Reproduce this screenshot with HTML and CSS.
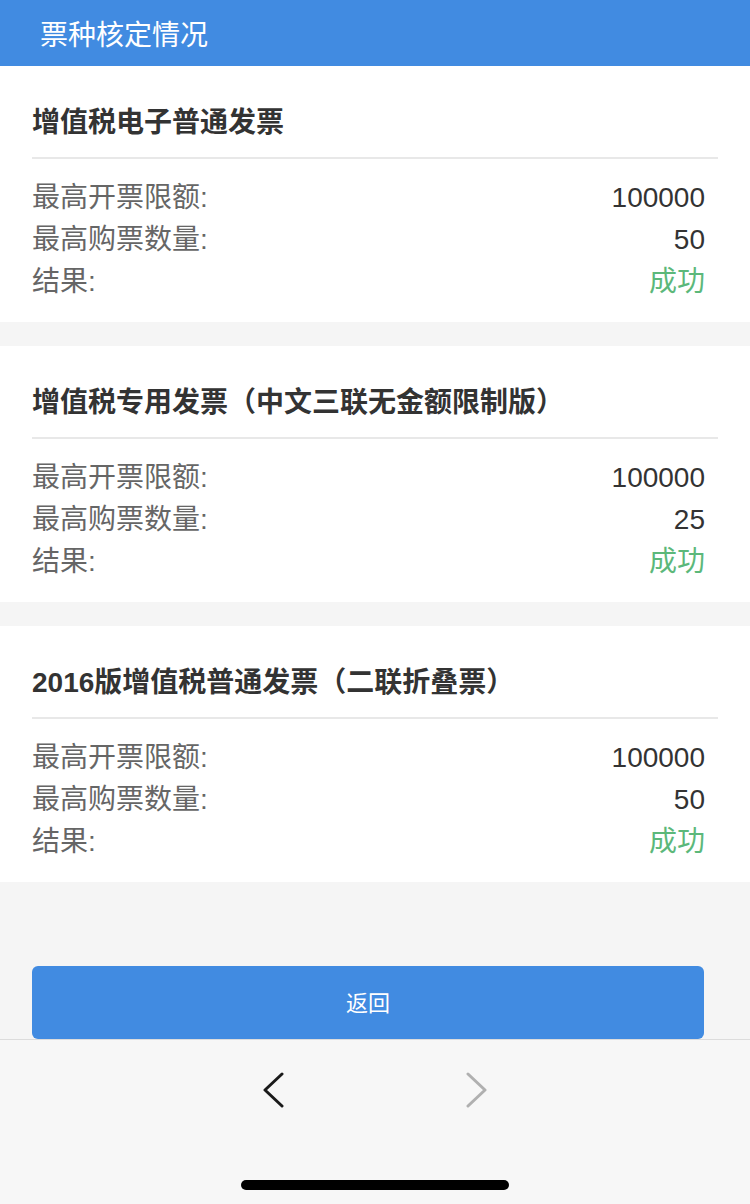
FILE: index.html
```html
<!DOCTYPE html>
<html lang="zh-CN">
<head>
    <meta charset="UTF-8">
    <meta name="viewport" content="width=device-width, initial-scale=1.0">
    <title>票种核定情况</title>
    <link rel="stylesheet" href="styles.css">
</head>
<body>
    <div class="header">票种核定情况</div>

    <div class="card">
        <div class="card-title">增值税电子普通发票</div>
        <div class="rows">
            <div class="row"><span class="label">最高开票限额:</span><span class="value">100000</span></div>
            <div class="row"><span class="label">最高购票数量:</span><span class="value">50</span></div>
            <div class="row"><span class="label">结果:</span><span class="value ok">成功</span></div>
        </div>
    </div>

    <div class="card">
        <div class="card-title">增值税专用发票（中文三联无金额限制版）</div>
        <div class="rows">
            <div class="row"><span class="label">最高开票限额:</span><span class="value">100000</span></div>
            <div class="row"><span class="label">最高购票数量:</span><span class="value">25</span></div>
            <div class="row"><span class="label">结果:</span><span class="value ok">成功</span></div>
        </div>
    </div>

    <div class="card">
        <div class="card-title">2016版增值税普通发票（二联折叠票）</div>
        <div class="rows">
            <div class="row"><span class="label">最高开票限额:</span><span class="value">100000</span></div>
            <div class="row"><span class="label">最高购票数量:</span><span class="value">50</span></div>
            <div class="row"><span class="label">结果:</span><span class="value ok">成功</span></div>
        </div>
    </div>

    <div class="actions">
        <button type="button" class="back-btn">返回</button>
    </div>

    <div class="toolbar">
        <div class="nav">
            <svg class="chev" width="24" height="36" viewBox="0 0 24 36">
                <polyline points="20,2 3,18 20,34" fill="none" stroke="#1a1a1a" stroke-width="3" stroke-linecap="round" stroke-linejoin="round"/>
            </svg>
            <svg class="chev" width="24" height="36" viewBox="0 0 24 36">
                <polyline points="4,2 21,18 4,34" fill="none" stroke="#b0b0b0" stroke-width="3" stroke-linecap="round" stroke-linejoin="round"/>
            </svg>
        </div>
        <div class="home-bar"></div>
    </div>
</body>
</html>
```

FILE: styles.css
```css
body {
    margin: 0;
    background-color: #f5f5f5;
    font-family: "Liberation Sans", "Noto Sans CJK SC", sans-serif;
    color: #333;
}
.header {
    height: 66px;
    line-height: 72px;
    padding-left: 40px;
    background: #418be1;
    color: white;
    font-size: 28px;
}
.card {
    background: white;
    padding: 36px 32px 19px;
    margin-bottom: 24px;
}
.card-title {
    font-size: 28px;
    font-weight: bold;
    line-height: 42px;
    padding-bottom: 13px;
    border-bottom: 2px solid #e8e8e8;
    color: #333;
}
.rows {
    margin-top: 18px;
    padding-right: 13px;
}
.row {
    display: flex;
    justify-content: space-between;
    font-size: 28px;
    line-height: 42px;
}
.label {
    color: #666;
}
.value {
    color: #333;
}
.value.ok {
    color: #5cb87a;
}
.actions {
    padding: 60px 46px 0 32px;
}
.back-btn {
    display: block;
    width: 100%;
    height: 73px;
    padding-bottom: 4px;
    border: none;
    border-radius: 6px;
    background: #418be1;
    color: white;
    font-family: "Noto Sans CJK SC", sans-serif;
    font-size: 22px;
}
.toolbar {
    height: 164px;
    border-top: 1px solid #dcdcdc;
    background: #f7f7f7;
    display: flex;
    flex-direction: column;
    align-items: center;
}
.nav {
    display: flex;
    gap: 178px;
    margin-top: 32px;
}
.home-bar {
    width: 268px;
    height: 10px;
    border-radius: 5px;
    background: black;
    margin-top: 72px;
}
```
